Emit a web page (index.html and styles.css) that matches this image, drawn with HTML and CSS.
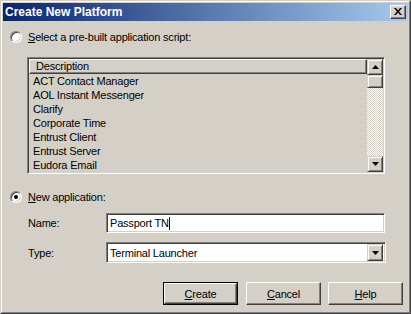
FILE: index.html
```html
<!DOCTYPE html>
<html>
<head>
<meta charset="utf-8">
<link rel="stylesheet" href="styles.css">
</head>
<body>
<div class="window">
  <div class="frame">
    <div class="titlebar">
      <span class="title">Create New Platform</span>
      <div class="closebtn">
        <svg width="8" height="7" viewBox="0 0 8 7"><path d="M0 0h2l2 2.5L6 0h2L5 3.5 8 7H6L4 4.5 2 7H0l3-3.5z" fill="#000"/></svg>
      </div>
    </div>
    <div class="content">
      <div class="radio-row first">
        <span class="radio"></span>
        <span class="label"><u>S</u>elect a pre-built application script:</span>
      </div>
      <div class="listbox">
        <div class="list-main">
          <div class="list-header">Description</div>
          <div class="list-item">ACT Contact Manager</div>
          <div class="list-item">AOL Instant Messenger</div>
          <div class="list-item">Clarify</div>
          <div class="list-item">Corporate Time</div>
          <div class="list-item">Entrust Client</div>
          <div class="list-item">Entrust Server</div>
          <div class="list-item">Eudora Email</div>
        </div>
        <div class="scrollbar">
          <div class="sb-btn"><svg width="7" height="4" viewBox="0 0 7 4"><path d="M3.5 0L7 4H0z" fill="#000"/></svg></div>
          <div class="sb-thumb"></div>
          <div class="sb-track"></div>
          <div class="sb-btn"><svg width="7" height="4" viewBox="0 0 7 4"><path d="M0 0h7L3.5 4z" fill="#000"/></svg></div>
        </div>
      </div>
      <div class="radio-row second">
        <span class="radio checked"><span class="dot"></span></span>
        <span class="label"><u>N</u>ew application:</span>
      </div>
      <div class="field-row name-row">
        <span class="field-label">Name:</span>
        <div class="textbox">Passport TN<span class="caret"></span></div>
      </div>
      <div class="field-row type-row">
        <span class="field-label">Type:</span>
        <div class="combobox">
          <span class="combo-text">Terminal Launcher</span>
          <div class="sb-btn combo-btn"><svg width="7" height="4" viewBox="0 0 7 4"><path d="M0 0h7L3.5 4z" fill="#000"/></svg></div>
        </div>
      </div>
      <div class="buttons">
        <div class="btn default"><div class="btn-inner"><u>C</u>reate</div></div>
        <div class="btn"><div class="btn-inner"><u>C</u>ancel</div></div>
        <div class="btn"><div class="btn-inner"><u>H</u>elp</div></div>
      </div>
    </div>
  </div>
</div>
</body>
</html>
```
FILE: styles.css
```css
html, body {
  margin: 0;
  padding: 0;
  background: #d4d0c8;
}
body {
  font-family: "Liberation Sans", Arial, sans-serif;
  font-size: 11px;
  letter-spacing: -0.2px;
  color: #000;
}
.window {
  width: 411px;
  height: 314px;
  box-sizing: border-box;
  border: 1px solid;
  border-color: #d4d0c8 #404040 #404040 #d4d0c8;
  background: #d4d0c8;
}
.frame {
  height: 100%;
  box-sizing: border-box;
  border: 1px solid;
  border-color: #ffffff #808080 #808080 #ffffff;
  padding: 1px;
  display: flex;
  flex-direction: column;
}
.titlebar {
  height: 18px;
  flex: none;
  background: linear-gradient(to right, #0a246a, #a6caf0);
  display: flex;
  align-items: center;
  justify-content: space-between;
  padding: 0 2px 0 2px;
}
.title {
  color: #fff;
  font-weight: bold;
  font-size: 12px;
  letter-spacing: 0;
  font-family: "Liberation Sans", Arial, sans-serif;
}
.closebtn {
  width: 16px;
  height: 14px;
  box-sizing: border-box;
  background: #d4d0c8;
  border: 1px solid;
  border-color: #fff #404040 #404040 #fff;
  box-shadow: inset -1px -1px #808080;
  display: flex;
  align-items: center;
  justify-content: center;
  padding: 0 1px 1px 0;
}
.closebtn svg { display: block; }
.content {
  flex: 1;
  display: flex;
  flex-direction: column;
}
.radio-row {
  display: flex;
  align-items: center;
  height: 14px;
  padding-left: 7px;
}
.radio-row.first { margin-top: 9px; }
.radio-row.second { margin-top: 16px; }
.radio {
  width: 12px;
  height: 12px;
  box-sizing: border-box;
  border-radius: 50%;
  background: #fff;
  border: 1px solid;
  border-color: #808080 #fff #fff #808080;
  box-shadow: inset 1px 1px #404040, inset -1px -1px #d4d0c8;
  display: flex;
  align-items: center;
  justify-content: center;
  flex: none;
}
.dot {
  width: 4px;
  height: 4px;
  border-radius: 50%;
  background: #000;
}
.label {
  margin-left: 6px;
}
u { text-decoration: underline; text-underline-offset: 1px; }
.listbox {
  margin-top: 13px;
  margin-left: 24px;
  width: 358px;
  height: 117px;
  box-sizing: border-box;
  border: 1px solid;
  border-color: #808080 #fff #fff #808080;
  box-shadow: inset 1px 1px #404040, inset -1px -1px #d4d0c8;
  padding: 1px;
  display: flex;
}
.list-main {
  flex: 1;
  display: flex;
  flex-direction: column;
}
.list-header {
  height: 15px;
  box-sizing: border-box;
  border: 1px solid;
  border-color: #fff #404040 #404040 #fff;
  box-shadow: inset -1px -1px #808080;
  padding-left: 6px;
  line-height: 13px;
}
.list-item {
  height: 14px;
  line-height: 14px;
  padding-left: 4px;
  white-space: nowrap;
}
.scrollbar {
  width: 16px;
  display: flex;
  flex-direction: column;
}
.sb-btn {
  width: 16px;
  height: 16px;
  box-sizing: border-box;
  background: #d4d0c8;
  border: 1px solid;
  border-color: #d4d0c8 #404040 #404040 #d4d0c8;
  box-shadow: inset 1px 1px #fff, inset -1px -1px #808080;
  display: flex;
  align-items: center;
  justify-content: center;
  flex: none;
}
.sb-btn svg { display: block; }
.sb-thumb {
  height: 13px;
  box-sizing: border-box;
  border: 1px solid;
  border-color: #d4d0c8 #404040 #404040 #d4d0c8;
  box-shadow: inset 1px 1px #fff, inset -1px -1px #808080;
  flex: none;
}
.sb-track {
  flex: 1;
  background-color: #fff;
  background-image: repeating-conic-gradient(#d4d0c8 0 25%, #fff 0 50%);
  background-size: 2px 2px;
}
.field-row {
  display: flex;
  align-items: center;
  padding-left: 25px;
}
.name-row { margin-top: 9px; }
.type-row { margin-top: 9px; }
.field-label {
  width: 78px;
  flex: none;
}
.textbox {
  width: 279px;
  height: 20px;
  box-sizing: border-box;
  background: #fff;
  border: 1px solid;
  border-color: #808080 #fff #fff #808080;
  box-shadow: inset 1px 1px #404040, inset -1px -1px #d4d0c8;
  padding-left: 3px;
  display: flex;
  align-items: center;
  white-space: nowrap;
}
.caret {
  display: inline-block;
  width: 1px;
  height: 13px;
  background: #000;
}
.combobox {
  width: 280px;
  height: 21px;
  box-sizing: border-box;
  background: #fff;
  border: 1px solid;
  border-color: #808080 #fff #fff #808080;
  box-shadow: inset 1px 1px #404040, inset -1px -1px #d4d0c8;
  padding: 2px 2px 2px 3px;
  display: flex;
  align-items: center;
}
.combo-text { flex: 1; }
.combo-btn {
  height: 17px;
}
.buttons {
  display: flex;
  justify-content: flex-end;
  gap: 7px;
  margin-top: 19px;
  padding-right: 5px;
}
.btn {
  width: 75px;
  height: 23px;
  box-sizing: border-box;
  border: 1px solid;
  border-color: #fff #404040 #404040 #fff;
  box-shadow: inset -1px -1px #808080;
  display: flex;
}
.btn.default {
  border: 1px solid #000;
  box-shadow: none;
  margin-right: 1px;
}
.btn-inner {
  flex: 1;
  display: flex;
  align-items: center;
  justify-content: center;
}
.btn.default .btn-inner {
  border: 1px solid;
  border-color: #fff #404040 #404040 #fff;
  box-shadow: inset -1px -1px #808080;
}
```
